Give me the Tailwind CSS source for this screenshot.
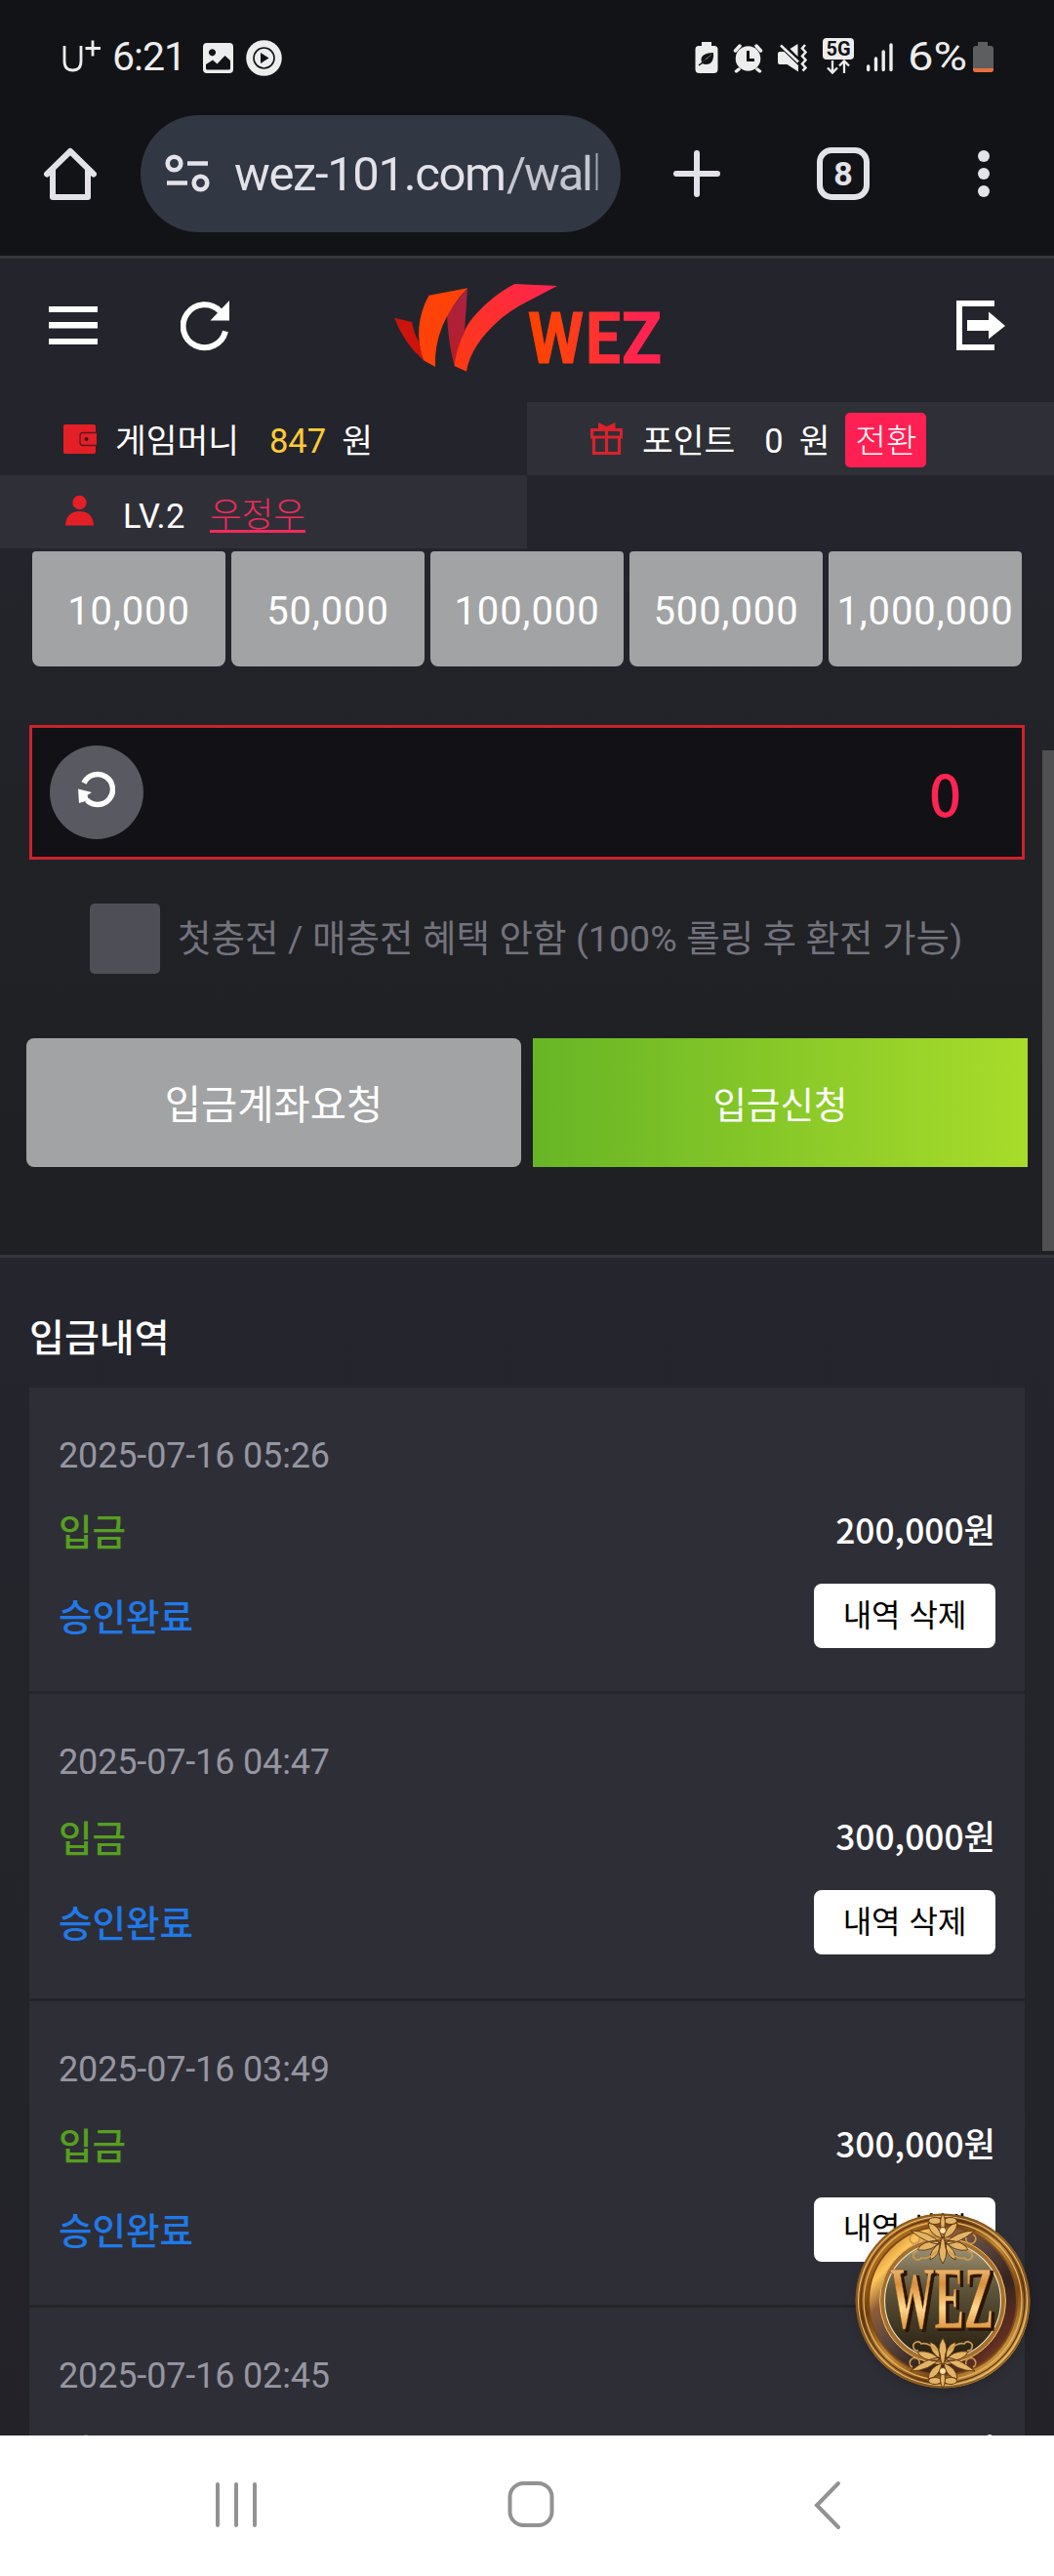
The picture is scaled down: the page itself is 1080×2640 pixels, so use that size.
<!DOCTYPE html>
<html lang="ko">
<head>
  <meta charset="UTF-8" />
  <meta name="viewport" content="width=device-width, initial-scale=1.0"/>
  <title>WEZ</title>
  <script src="https://cdn.jsdelivr.net/npm/@tailwindcss/browser@4"></script>
  <style>
    body {
      font-family: 'Noto Sans CJK KR', sans-serif;
    }
  </style>
</head>
<body class="bg-[#24242c] text-white">
  <div class="relative flex flex-col w-[1080px] h-[2640px] overflow-hidden leading-none">

    <!-- Status bar -->
    <div class="flex items-center justify-between h-[118px] shrink-0 pl-[62px] pr-[62px] bg-[#121316] text-[#ededed] font-['Roboto',sans-serif]">
      <svg class="w-[240px] h-[60px]" viewBox="62 29 240 60" fill="#ededed">
        <path d="M66 47v15.500c0 6 3 9.500 8.500 9.500s8.500-3.500 8.500-9.500V47M95 41.500v16M87.500 49.500h15.500" fill="none" stroke="#ededed" stroke-width="2.800"/>
        <text x="115" y="72" font-size="41" textLength="76">6:21</text>
        <path fill-rule="evenodd" d="M212 44h23a4 4 0 0 1 4 4v23a4 4 0 0 1-4 4h-23a4 4 0 0 1-4-4V48a4 4 0 0 1 4-4zm5.500 6.200a3.600 3.600 0 1 0 .01 0zM211 66v4q0 1.500 1.500 1.500h22q1.500 0 1.500-1.500v-8l-5.500-5-8 8.500-4.500-4z"/>
        <circle cx="270.500" cy="59.500" r="18.300"/>
        <circle cx="270.500" cy="59.500" r="10.500" fill="none" stroke="#121316" stroke-width="1.600"/>
        <path d="M267 54v11l8.500-5.500z" fill="#121316"/>
      </svg>
      <svg class="w-[310px] h-[60px]" viewBox="708 29 310 60" fill="#ededed">
        <!-- power saving -->
        <path d="M719 43h10v4h3a3.500 3.500 0 0 1 3.500 3.500V71a4 4 0 0 1-4 4h-15a4 4 0 0 1-4-4V50.500A3.500 3.500 0 0 1 716 47h3z"/>
        <path d="M731 54q.8 12-7.500 12-2.500 0-4-1l-3 2.500M719 64q-3-9.500 12-10" fill="#121316"/>
        <path d="M716 67l8-6" stroke="#121316" stroke-width="1.500"/>
        <!-- alarm -->
        <circle cx="766.500" cy="60" r="12.800"/>
        <path d="M753.500 52l4.500-5M779.500 52l-4.500-5M757 71l-2.500 2M776 71l2.500 2" stroke="#ededed" stroke-width="3.500" stroke-linecap="round"/>
        <path d="M766.500 52v9.500h6.500" fill="none" stroke="#121316" stroke-width="3"/>
        <!-- mute -->
        <path d="M799 53h4.500L818 67v6.500L806.500 66H799q-2 0-2-2v-9q0-2 2-2zM809.500 50l8-5v13z"/>
        <path d="M800 46.500l18 17" stroke="#ededed" stroke-width="2.500"/>
        <path d="M825 46l-3 3.500 3.500 4-3.500 4 3.500 4-3.500 4 3.500 4-3 3" fill="none" stroke="#ededed" stroke-width="2.500"/>
        <!-- 5G -->
        <rect x="843" y="39" width="32" height="22" rx="4"/>
        <text x="859" y="57" font-size="20" font-weight="700" text-anchor="middle" fill="#121316">5G</text>
        <path d="M853 62v12M848 69.500l5 5 5-5M865 75V63M860 67.500l5-5 5 5" fill="none" stroke="#ededed" stroke-width="2.300"/>
        <path d="M889.700 68v3.500M897.500 60v11.500M905.200 53v18.500M913 46v25.500" stroke="#ededed" stroke-width="3.400" stroke-linecap="round"/>
        <text x="930" y="72" font-size="41" textLength="61" lengthAdjust="spacingAndGlyphs">6%</text>
        <path d="M1002 43h10v4h3q3 0 3 3v21q0 3-3 3h-15q-3 0-3-3V50q0-3 3-3h2z" fill="#5d5e60"/>
        <path d="M997 70h21v1q0 3-3 3h-15q-3 0-3-3z" fill="#e8703f"/>
      </svg>
    </div>

    <!-- Browser toolbar -->
    <div class="flex h-[144px] shrink-0 pl-[45px] bg-[#121316] text-[#e3e2e9]">
      <svg class="w-[54px] h-[54px] mt-[33px] shrink-0" viewBox="0 0 54 54" fill="none" stroke="#e3e2e9" stroke-width="6" stroke-linejoin="round" stroke-linecap="round">
        <path d="M3 27.500L27 4l24 23.500M9 23v28h36V23"/>
      </svg>
      <div class="flex items-center w-[492px] h-[120px] ml-[45px] pl-[25px] rounded-full bg-[#323744] shrink-0">
        <svg class="w-[46px] h-[40px] shrink-0" viewBox="0 0 46 40" fill="none" stroke="#e3e2e9" stroke-width="4.600">
          <circle cx="9.500" cy="9.500" r="6.800"/><path d="M23 9.500h21M2 29.500h21"/><circle cx="36.500" cy="29.500" r="6.800"/>
        </svg>
        <svg class="w-[374px] h-[60px] ml-[25px]" viewBox="0 0 374 60" font-family="Roboto" font-size="49">
          <text x="0" y="47" fill="#e3e2e9" textLength="279">wez-101.com</text>
          <text x="279" y="47" fill="#c3c5cf" textLength="89">/wal</text>
          <path d="M371.500 9v38" stroke="#a4a8b4" stroke-width="2"/>
        </svg>
      </div>
      <svg class="w-[48px] h-[48px] ml-[54px] mt-[36px] shrink-0" viewBox="0 0 48 48" stroke="#e3e2e9" stroke-width="6" stroke-linecap="round">
        <path d="M24 3v42M3 24h42"/>
      </svg>
      <div class="flex items-center justify-center w-[54px] h-[54px] ml-[99px] mt-[33px] shrink-0 border-6 border-[#e3e2e9] rounded-[15px] font-['Roboto',sans-serif] font-bold text-[34px]">8</div>
      <div class="flex flex-col gap-1.5 ml-[111px] mt-[36px]">
        <span class="w-3 h-3 rounded-full bg-[#e3e2e9]"></span>
        <span class="w-3 h-3 rounded-full bg-[#e3e2e9]"></span>
        <span class="w-3 h-3 rounded-full bg-[#e3e2e9]"></span>
      </div>
    </div>

    <!-- Site header -->
    <header class="flex h-[150px] shrink-0 pl-[50px] pr-[50px] border-t-3 border-[#35353a]">
      <svg class="w-[50px] h-[39px] mt-[49px]" viewBox="0 0 50 39" fill="#fff">
        <path d="M0 0h50v6H0zM0 16h50v6.500H0zM0 33h50v6H0z"/>
      </svg>
      <svg class="w-[51px] h-[52px] ml-[85px] mt-[43px]" viewBox="0 0 51 52">
        <path d="M46 31.500A22 22 0 1 1 40.500 11" fill="none" stroke="#fff" stroke-width="6"/>
        <path d="M50 0v20.500H30.500z" fill="#fff"/>
      </svg>
      <svg class="w-[276px] h-[96px] ml-[166px] mt-[23px]" viewBox="402 288 276 96">
        <defs>
          <linearGradient id="sweep" x1="465" y1="375" x2="571" y2="293" gradientUnits="userSpaceOnUse"><stop offset="0" stop-color="#ff3a12"/><stop offset=".7" stop-color="#ff2a3e"/><stop offset="1" stop-color="#ff2450"/></linearGradient>
          <linearGradient id="word" x1="541" y1="0" x2="676" y2="0" gradientUnits="userSpaceOnUse"><stop offset="0" stop-color="#ff4200"/><stop offset=".25" stop-color="#ff4010"/><stop offset=".55" stop-color="#ff3033"/><stop offset=".85" stop-color="#ff2450"/></linearGradient>
          <linearGradient id="fold" x1="0" y1="295" x2="0" y2="375" gradientUnits="userSpaceOnUse"><stop offset="0" stop-color="#a92345"/><stop offset="1" stop-color="#b91c25"/></linearGradient>
        </defs>
        <path d="M404 325.700L422 330Q424 341 429 350L434 369.300Q414 352 404 325.700z" fill="#cc140c"/>
        <path d="M479 295.300L476 340L465.600 375Q459 350 458 321.700z" fill="url(#fold)"/>
        <path d="M439.400 302.700L479 295.300Q444 333 446 376L434 369.300Q422 335 439.400 302.700z" fill="#ff4208"/>
        <path d="M465.600 375L478 380.700C482 353 510 324 540 309.300L571 293L527.500 291C505 302 480 327 476 340Q467 359 465.600 375z" fill="url(#sweep)"/>
        <g font-family="Roboto" font-weight="700" font-size="71.500" fill="url(#word)" stroke="url(#word)" stroke-width="1">
          <text x="541" y="372" textLength="57" lengthAdjust="spacingAndGlyphs">W</text>
          <text x="600" y="372" textLength="36" lengthAdjust="spacingAndGlyphs">E</text>
          <text x="637" y="372" textLength="41" lengthAdjust="spacingAndGlyphs">Z</text>
        </g>
      </svg>
      <svg class="w-[50px] h-[51px] ml-auto mt-[43px]" viewBox="0 0 50 51" fill="#fff">
        <path d="M0 0h39v6H6v39h33v6H0zM11 20h22v-8.500l17 14.500-17 13.500V31H11z"/>
      </svg>
    </header>

    <!-- Member info -->
    <div class="grid grid-cols-2 grid-rows-[75px_75px] shrink-0 text-[34.5px] font-['Roboto','Noto_Sans_CJK_KR',sans-serif]">
      <div class="flex items-center pl-[65px]">
        <svg class="w-[34px] h-[30px]" viewBox="0 0 34 30">
          <path d="M1.500 0H31q2 0 2 2v26q0 2-2 2H1.500Q0 30 0 28V2q0-2 1.500-2z" fill="#e51f26"/>
          <path d="M34 8.500H20q-3 0-3 3v7q0 3 3 3h14" fill="#e51f26" stroke="#5a1a22" stroke-width="1.300"/>
          <circle cx="23.500" cy="15" r="2" fill="#3a1a20"/>
        </svg>
        <span class="ml-[19px] mt-[5px]">게임머니</span>
        <span class="ml-[31px] mt-[5px] text-[#ffcb35]">847</span>
        <span class="ml-[16px] mt-[5px]">원</span>
      </div>
      <div class="flex items-center pl-[65px] bg-[#2f2f37]">
        <svg class="w-[33px] h-[33px]" viewBox="0 0 33 33" fill="none" stroke="#d9222b" stroke-width="3.200">
          <path d="M1.600 7.500h30v7.500h-30zM3.500 15h26v16.500h-26zM16.500 7.500v24"/><path d="M8 0l8.500 4L25.500 0v6H8z" fill="#d9222b" stroke="none"/>
        </svg>
        <span class="ml-[20px] mt-[5px]">포인트</span>
        <span class="ml-[30px] mt-[5px]">0</span>
        <span class="ml-[16px] mt-[5px]">원</span>
        <button class="flex items-center justify-center w-[83px] h-[56px] ml-[16px] mt-[3px] pt-[3px] rounded-[5px] bg-[#ff2053] font-light">전환</button>
      </div>
      <div class="flex items-center pl-[67px] bg-[#2f2f37]">
        <svg class="w-[30px] h-[32px] -mt-1" viewBox="0 0 30 32" fill="#e51f26">
          <circle cx="14.500" cy="8" r="7.200"/><path d="M0 31.500Q1 17 14.500 17T29 31.500z"/>
        </svg>
        <span class="ml-[29px] mt-[10px] tracking-[0.4px]">LV.2</span>
        <span class="ml-[25px] mt-[8px] text-[35.5px] font-light text-[#f22a5c] underline decoration-[3px] underline-offset-[3px] [text-decoration-skip-ink:none]">우정우</span>
      </div>
      <div></div>
    </div>

    <!-- Deposit form -->
    <section class="h-[724px] shrink-0 bg-linear-to-b from-[#24242c] via-[#212226] via-40% to-[#1f2024]">
      <div class="h-[121px] mt-[3px] px-[33px] flex gap-1.5 text-[40px] tracking-[0.9px] font-['Roboto',sans-serif]">
        <button class="flex items-center justify-center w-[198px] h-[118px] pt-[5px] rounded-b-[8px] rounded-t-[4px] bg-[#a2a3a4]">10,000</button>
        <button class="flex items-center justify-center w-[198px] h-[118px] pt-[5px] rounded-b-[8px] rounded-t-[4px] bg-[#a2a3a4]">50,000</button>
        <button class="flex items-center justify-center w-[198px] h-[118px] pt-[5px] rounded-b-[8px] rounded-t-[4px] bg-[#a2a3a4]">100,000</button>
        <button class="flex items-center justify-center w-[198px] h-[118px] pt-[5px] rounded-b-[8px] rounded-t-[4px] bg-[#a2a3a4]">500,000</button>
        <button class="flex items-center justify-center w-[198px] h-[118px] pt-[5px] rounded-b-[8px] rounded-t-[4px] bg-[#a2a3a4]">1,000,000</button>
      </div>

      <div class="flex items-center justify-between h-[138px] mx-[30px] mt-[57px] pl-[18px] pr-[62px] border-3 border-[#cb232d] bg-[#121116]">
        <div class="flex items-center justify-center w-[96px] h-[96px] rounded-full bg-[#595962]">
          <svg class="w-[38px] h-[38px] -mt-1.5" viewBox="0 0 38 38">
            <path d="M6 12.500A15.500 15.500 0 1 1 9 30" fill="none" stroke="#fff" stroke-width="5.500"/>
            <path d="M0 18.500l14 3.500-4.500 3 1.500 5L1 33z" fill="#fff"/>
          </svg>
        </div>
        <span class="text-[58px] font-medium text-[#ff2453] -mt-[1px]">0</span>
      </div>

      <label class="flex items-center h-[72px] mt-[45px] ml-[92px] text-[37.5px] text-[#73737d]">
        <span class="w-[72px] h-[72px] rounded-[5px] bg-[#4e4e57] shrink-0"></span>
        <span class="ml-[18px] mt-[1px] whitespace-nowrap tracking-[0.06px] font-['Roboto','Noto_Sans_CJK_KR',sans-serif]">첫충전 / 매충전 혜택 안함 (100% 롤링 후 환전 가능)</span>
      </label>

      <div class="flex gap-3 mt-[66px] px-[27px]">
        <button class="w-[507px] h-[132px] rounded-[8px] bg-[#a2a3a4] text-[40.5px]">입금계좌요청</button>
        <button class="w-[507px] h-[132px] bg-linear-to-r from-[#67b526] to-[#a8dc2a] text-[37.5px]">입금신청</button>
      </div>
    </section>

    <!-- Deposit history -->
    <section class="h-[1210px] shrink-0 px-[30px] border-t-3 border-[#35353c] overflow-hidden bg-linear-to-b from-[#25252d] to-[#222228]">
      <h2 class="pt-[60px] h-[133px] text-[39px] font-medium">입금내역</h2>
      <div id="history" class="flex flex-col gap-[3px]"></div>
    </section>

    <!-- System navigation -->
    <nav class="h-[144px] shrink-0 bg-white">
      <svg class="w-[1080px] h-[144px]" viewBox="0 0 1080 144" fill="none" stroke="#929292" stroke-width="4" stroke-linecap="round">
        <path d="M223 50v42M242 50v42M261 50v42"/>
        <rect x="522.500" y="49" width="43" height="43" rx="14"/>
        <path d="M859 49l-22 22.500 22 22.500"/>
      </svg>
    </nav>

    <!-- Scrollbar -->
    <div class="absolute right-0 top-[769px] w-3 h-[513px] bg-[#504f52]"></div>

    <!-- Floating medal -->
    <svg class="absolute left-[871px] top-[2263px] w-[190px] h-[190px] drop-shadow-lg" viewBox="-95 -95 190 190">
      <defs>
        <linearGradient id="rim" x1="0" y1="0" x2="1" y2="1"><stop offset="0" stop-color="#d9a24a"/><stop offset=".2" stop-color="#a8681d"/><stop offset=".32" stop-color="#6c3d10"/><stop offset=".5" stop-color="#c48a38"/><stop offset=".68" stop-color="#7a4716"/><stop offset=".85" stop-color="#dba64a"/><stop offset="1" stop-color="#5c3310"/></linearGradient>
        <linearGradient id="ring" x1="0" y1="0" x2="1" y2="1"><stop offset=".1" stop-color="#c9822c"/><stop offset=".2" stop-color="#ffc65a"/><stop offset=".3" stop-color="#8f5c35"/><stop offset=".45" stop-color="#5a4640"/><stop offset=".65" stop-color="#35241f"/><stop offset=".82" stop-color="#5e2d22"/><stop offset="1" stop-color="#b5762b"/></linearGradient>
        <linearGradient id="plate" x1="0" y1="0" x2="0" y2="1"><stop offset="0" stop-color="#a79b7c"/><stop offset=".4" stop-color="#5e5439"/><stop offset="1" stop-color="#231b0f"/></linearGradient>
        <linearGradient id="gold" x1="0" y1="0" x2="0" y2="1"><stop offset="0" stop-color="#ffe9b4"/><stop offset=".35" stop-color="#d98f3c"/><stop offset=".6" stop-color="#ffd78a"/><stop offset=".8" stop-color="#e09a48"/><stop offset="1" stop-color="#ffdf9c"/></linearGradient>
        <g id="leaf" fill="#e3b465" stroke="#5a3210" stroke-width=".9">
          <path d="M-2-58Q-16-58-33-72Q-14-72-2-58zM2-58Q16-58 33-72Q14-72 2-58zM-1-64Q-14-68-15-80Q-3-78-1-64zM1-64Q14-68 15-80Q3-78 1-64zM-2-62Q-22-62-26-52Q-10-50-2-62zM2-62Q22-62 26-52Q10-50 2-62zM-2-60Q-14-52-13-42Q-3-46-2-60zM2-60Q14-52 13-42Q3-46 2-60zM0-66Q-8-50 0-38Q8-50 0-66z"/>
          <path d="M-6-51Q-15-42-22-44A4.500 4.500 0 1 1-25-51M6-51Q15-42 22-44A4.500 4.500 0 1 0 25-51M-24-65A5 5 0 1 1-31-68M24-65A5 5 0 1 0 31-68" fill="none" stroke="#c99a4d" stroke-width="1.700"/>
          <ellipse cx="-8" cy="-82" rx="6.500" ry="3.500"/><ellipse cx="8" cy="-82" rx="6.500" ry="3.500"/>
          <path d="M0-90Q-5-80 0-70Q5-80 0-90z"/>
          <circle cy="-72" r="3.500" fill="#ffe4a0"/>
        </g>
      </defs>
      <circle r="89.500" fill="url(#rim)"/>
      <circle r="88.500" fill="none" stroke="#8a5a20" stroke-width="1.500"/>
      <circle r="86.500" fill="none" stroke="#eccb84" stroke-width="1"/>
      <circle r="84" fill="none" stroke="#5e3510" stroke-width="1.300"/>
      <circle r="81" fill="none" stroke="#e6b45c" stroke-width="1.300"/>
      <circle r="76" fill="url(#ring)" stroke="#7d4916" stroke-width="2"/>
      <circle r="62.500" fill="url(#plate)" stroke="#a86f2c" stroke-width="4.500"/>
      <circle r="64.500" fill="none" stroke="#e9bd6d" stroke-width="1"/>
      <circle r="59.500" fill="none" stroke="#f2e3bd" stroke-width="1.200"/>
      <use href="#leaf"/>
      <use href="#leaf" transform="scale(1 -1)"/>
      <g font-family="'Liberation Serif'" font-weight="700" font-size="90">
        <text x="-51" y="30" textLength="106" lengthAdjust="spacingAndGlyphs" fill="#2b1608" stroke="#2b1608" stroke-width="2">WEZ</text>
        <text x="-54" y="28" textLength="106" lengthAdjust="spacingAndGlyphs" fill="url(#gold)" stroke="#8a4c18" stroke-width=".6">WEZ</text>
      </g>
    </svg>
  </div>

  <script>
    const deposits = [
      { date: '2025-07-16 05:26', amount: '200,000원' },
      { date: '2025-07-16 04:47', amount: '300,000원' },
      { date: '2025-07-16 03:49', amount: '300,000원' },
      { date: '2025-07-16 02:45', amount: '300,000원' }
    ];

    document.getElementById('history').innerHTML = deposits.map(d => `
      <div class="h-[311.4px] shrink-0 px-[30px] pt-[50px] bg-[#2e2e36]">
        <div class="h-[77px] pt-[2px] font-['Roboto',sans-serif] text-[36px] tracking-[-0.15px] text-[#9696a1]">${d.date}</div>
        <div class="flex justify-between h-[74px] font-medium">
          <span class="text-[37.5px] text-[#569f20]">입금</span>
          <span class="text-[35.3px]">${d.amount}</span>
        </div>
        <div class="flex justify-between">
          <span class="pt-[13px] text-[37.5px] font-medium text-[#2079e8]">승인완료</span>
          <button class="w-[186px] h-[66px] pb-[7px] rounded-[8px] bg-white text-black text-[32px]">내역 삭제</button>
        </div>
      </div>`).join('');
  </script>
</body>
</html>
